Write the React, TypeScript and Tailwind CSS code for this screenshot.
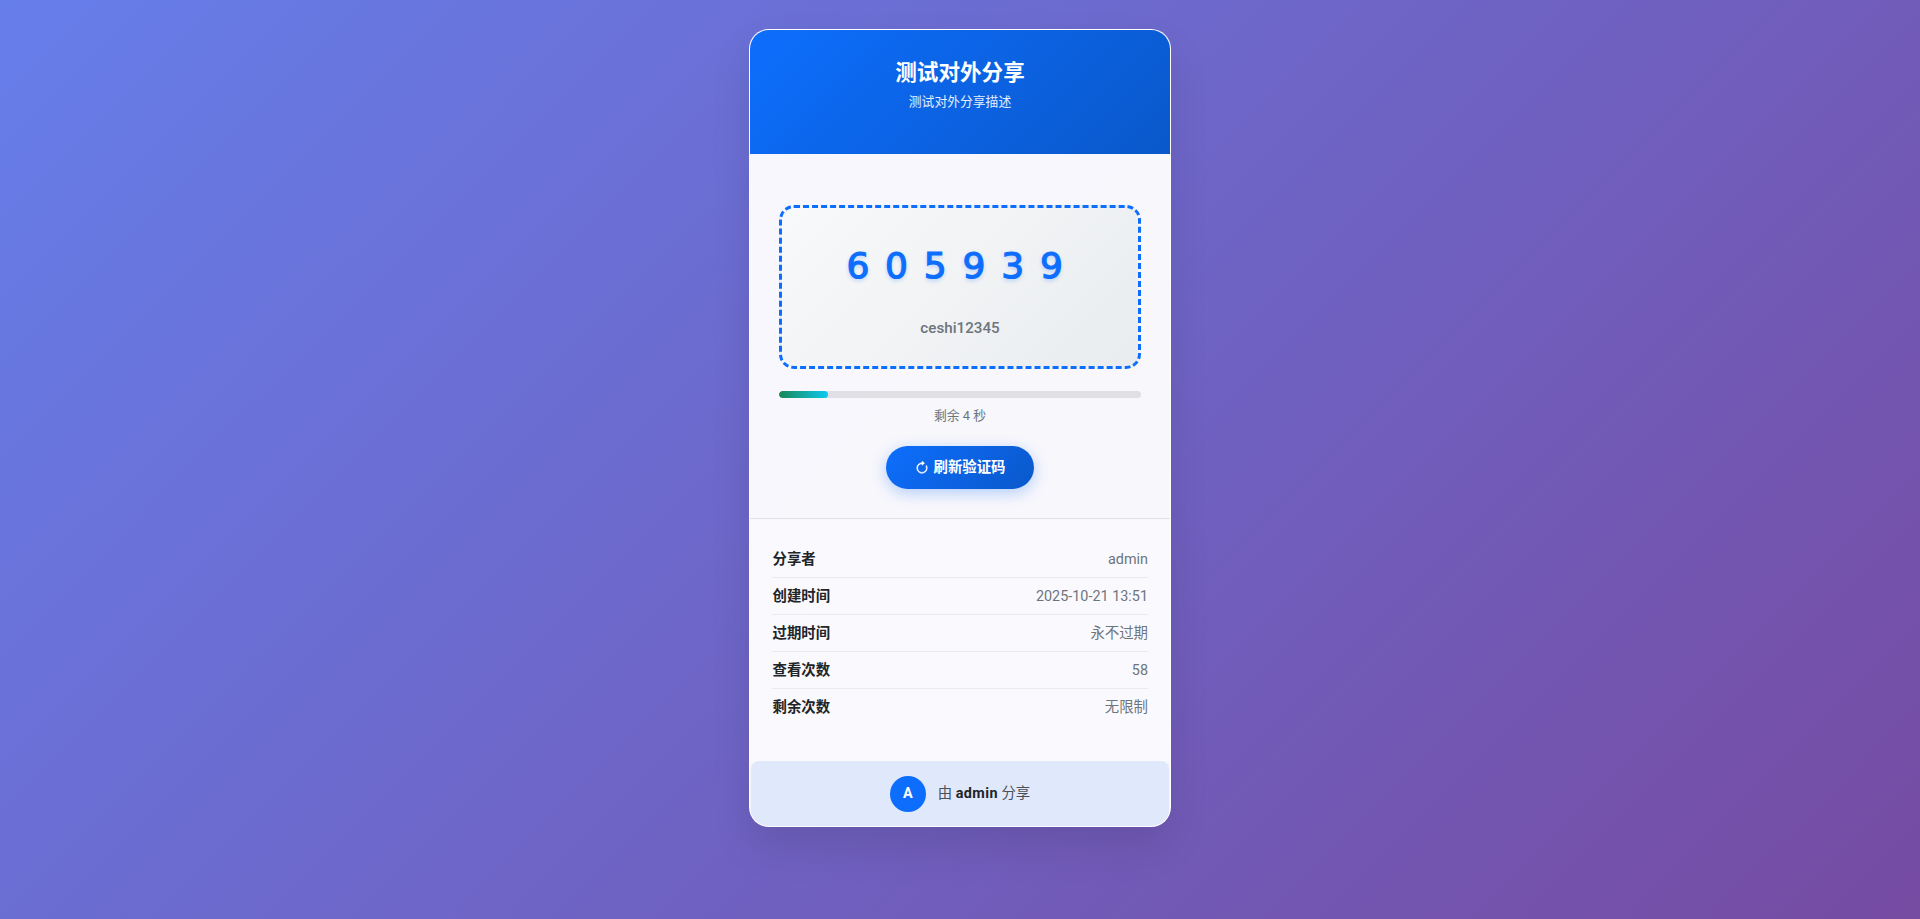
import { BsArrowClockwise } from "react-icons/bs";

const rows: [string, string][] = [
  ["分享者", "admin"],
  ["创建时间", "2025-10-21 13:51"],
  ["过期时间", "永不过期"],
  ["查看次数", "58"],
  ["剩余次数", "无限制"],
];

export default function App() {
  return (
    <div className="min-h-screen flex justify-center items-start pt-[29px] bg-[linear-gradient(135deg,#667eea_0%,#764ba2_100%)] font-['Roboto','Noto_Sans_CJK_SC',sans-serif]">
      <div className="w-[422px] h-[798px] flex flex-col border border-white/90 rounded-[20px] overflow-hidden bg-white/95 shadow-[0_20px_40px_rgba(0,0,0,0.1)]">
        <header className="h-[124px] flex flex-col items-center pt-[27px] text-white bg-[linear-gradient(135deg,#0d6efd,#0a58ca)]">
          <h1 className="text-[21.6px] leading-[32px] font-bold">测试对外分享</h1>
          <p className="mt-[3px] text-[12.8px] leading-[19px] text-white/90">测试对外分享描述</p>
        </header>
        <section className="flex flex-col items-center h-[365px] pt-[51px] px-[29px] border-b border-[#dee2e6]">
          <div className="w-full h-[164px] flex flex-col items-center border-[3px] border-dashed border-[#0d6efd] rounded-[15px] bg-[linear-gradient(135deg,#f8f9fa,#e9ecef)]">
            <div className="mt-[33px] pl-[5px] text-[36px] leading-[50px] font-normal tracking-[15.8px] [-webkit-text-stroke:1.2px_#0d6efd] text-[#0d6efd] font-['DejaVu_Sans',sans-serif] [text-shadow:0_2px_4px_rgba(13,110,253,0.3)]">
              605939
            </div>
            <div className="mt-[27px] text-[15.2px] leading-[20px] font-medium text-[#6c757d]">ceshi12345</div>
          </div>
          <div className="w-full h-[7px] mt-[22px] rounded-full overflow-hidden bg-[#dfdfe4]">
            <div className="w-[49px] h-full rounded-full bg-[linear-gradient(90deg,#198754,#0dcaf0)]" />
          </div>
          <div className="mt-[8px] text-[12.8px] leading-[19px] text-[#6c757d]">剩余 4 秒</div>
          <button className="mt-[21px] w-[148px] h-[43px] flex items-center justify-center gap-[5px] rounded-full text-white text-[14.4px] font-bold bg-[linear-gradient(135deg,#0d6efd,#0a58ca)] shadow-[0_4px_15px_rgba(13,110,253,0.3)]">
            <BsArrowClockwise className="w-[14px] h-[14px]" strokeWidth={0.6} />
            刷新验证码
          </button>
        </section>
        <section className="flex-1 pt-[22px] px-[22px] bg-white/30">
          {rows.map(([k, v], i) => (
            <div key={k} className={`h-[37px] pt-[1px] flex items-center justify-between text-[14.4px] ${i < rows.length - 1 ? "border-b border-[#e9ecef]" : ""}`}>
              <span className="pl-[0.5px] font-bold text-[#212529]">{k}</span>
              <span className="text-[#6c757d]">{v}</span>
            </div>
          ))}
        </section>
        <footer className="h-[65px] mx-[1px] flex items-center justify-center gap-[12px] rounded-t-[8px] bg-[#e0e8fb] text-[14.4px] text-[#495057]">
          <div className="w-[36px] h-[36px] flex items-center justify-center rounded-full bg-[#0d6efd] text-white font-bold text-[14.4px]">A</div>
          <span>由 <strong className="font-bold text-[#212529] tracking-[0.4px]">admin</strong> 分享</span>
        </footer>
      </div>
    </div>
  );
}
